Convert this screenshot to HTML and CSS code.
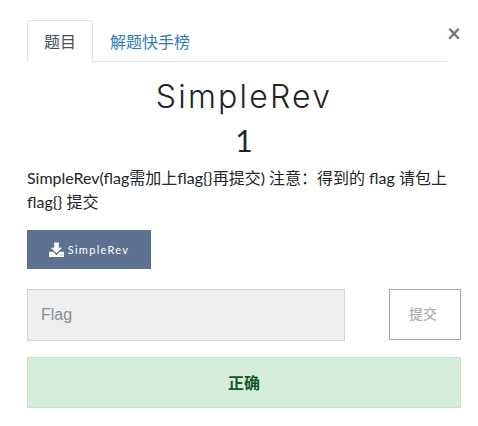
FILE: index.html
```html
<!DOCTYPE html>
<html lang="zh">
<head>
<meta charset="utf-8">
<title>SimpleRev</title>
<link rel="stylesheet" href="styles.css">
</head>
<body>
<main class="modal">
  <div class="tabs-row">
    <ul class="tabs">
      <li class="tab active">题目</li>
      <li class="tab"><a href="#">解题快手榜</a></li>
    </ul>
    <button class="close" type="button" aria-label="关闭">×</button>
  </div>
  <h1 class="title">SimpleRev</h1>
  <h2 class="value">1</h2>
  <p class="desc">SimpleRev(flag需加上flag{}再提交) 注意：得到的 flag 请包上 flag{} 提交</p>
  <a class="file" href="#">
    <svg class="dl" viewBox="0 0 16 16" aria-hidden="true"><path d="M5.500 0.500h5v5.500h3.500L8 12 2 6h3.500z"/><path d="M0 10.500h4.500L8 14l3.500-3.500H16V16H0zM11.500 13.500v1h1v-1zM13.500 13.500v1h1v-1z" fill-rule="evenodd"/></svg>
    <span>SimpleRev</span>
  </a>
  <form class="flag-row">
    <input class="flag" type="text" placeholder="Flag">
    <button class="submit" type="button">提交</button>
  </form>
  <div class="result">正确</div>
</main>
</body>
</html>
```
FILE: styles.css
```css
* { box-sizing: border-box; }
html, body { margin: 0; padding: 0; background: #fff; }
body {
  width: 478px;
  height: 426px;
  overflow: hidden;
  font-family: Lato, "Noto Sans CJK SC", sans-serif;
  color: #212529;
}
.modal { padding: 20px 17px 0 27px; }
.tabs-row { display: flex; align-items: flex-start; }
.tabs {
  flex: 1;
  display: flex;
  list-style: none;
  margin: 0;
  padding: 0;
  height: 42px;
  border-bottom: 1px solid #dee2e6;
}
.tab {
  height: 42px;
  padding: 0 16px;
  font-size: 16px;
  line-height: 42px;
  border: 1px solid transparent;
}
.tab a { color: #337ab7; text-decoration: none; }
.tab.active {
  color: #495057;
  background: #fff;
  border-color: #dee2e6 #dee2e6 #fff;
  border-radius: 4px 4px 0 0;
}
.close {
  width: 14px;
  height: 26px;
  padding: 0;
  border: 0;
  background: none;
  color: #777;
  font: 700 24px/26px Lato, sans-serif;
}
.title {
  margin: 15px 0 0;
  font-family: Inter, sans-serif;
  font-size: 32px;
  font-weight: 300;
  line-height: 40px;
  letter-spacing: 2.200px;
  text-align: center;
}
.value {
  margin: 6px 0 0;
  font-size: 30px;
  font-weight: 400;
  line-height: 34px;
  text-align: center;
}
.desc {
  margin: 9px 0 0;
  height: 48px;
  font-size: 16px;
  line-height: 24px;
}
.file {
  display: flex;
  align-items: center;
  justify-content: center;
  gap: 4px;
  width: 124px;
  height: 39px;
  margin-top: 16px;
  background: #5c7290;
  color: #fff;
  font-size: 11px;
  font-weight: 400;
  letter-spacing: 1.300px;
  text-decoration: none;
}
.dl { width: 15px; height: 15px; fill: #fff; }
.flag-row {
  display: flex;
  justify-content: space-between;
  align-items: flex-start;
  margin: 20px 0 0;
}
.flag {
  width: 318px;
  height: 52px;
  padding: 0 13px;
  border: 1px solid #ced4da;
  border-radius: 0;
  background: #efefef;
  font: 16px "Liberation Sans", sans-serif;
  outline: 0;
}
.flag::placeholder { color: #868e96; opacity: 1; }
.submit {
  width: 72px;
  height: 51px;
  padding: 0 4px 3px 0;
  border: 1px solid #a6a6a9;
  background: #fff;
  color: #b0b0b0;
  font: 500 14px "Noto Sans CJK SC", sans-serif;
}
.result {
  height: 51px;
  margin-top: 16px;
  border: 1px solid #c3e6cb;
  background: #d4edda;
  color: #155724;
  font: 700 16px/49px "Noto Sans CJK SC", sans-serif;
  text-align: center;
}
```
